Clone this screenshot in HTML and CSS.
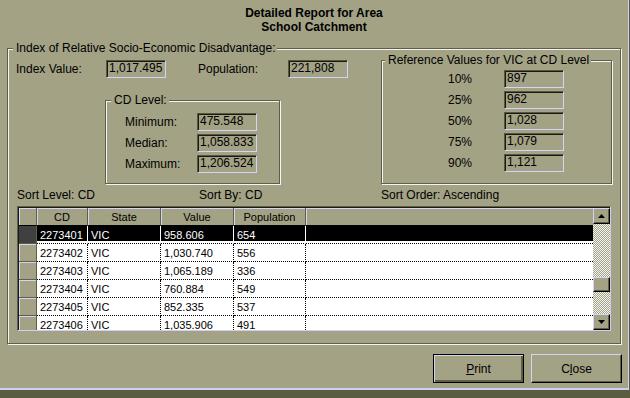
FILE: index.html
```html
<!DOCTYPE html>
<html lang="en">
<head>
    <meta charset="UTF-8">
    <title>Detailed Report for Area</title>
    <link rel="stylesheet" href="styles.css">
</head>
<body>
<div class="window">
    <div class="title">
        Detailed Report for Area<br>
        School Catchment
    </div>

    <fieldset class="group main-group">
        <legend>Index of Relative Socio-Economic Disadvantage:</legend>

        <div class="top">
            <div class="left-col">
                <div class="index-row">
                    <span class="lbl-wide">Index Value:</span>
                    <span class="field">1,017.495</span>
                    <span class="lbl-wide lbl-pop">Population:</span>
                    <span class="field">221,808</span>
                </div>

                <fieldset class="group cd-group">
                    <legend>CD Level:</legend>
                    <div class="value-row"><span class="lbl-cd">Minimum:</span><span class="field">475.548</span></div>
                    <div class="value-row"><span class="lbl-cd">Median:</span><span class="field">1,058.833</span></div>
                    <div class="value-row"><span class="lbl-cd">Maximum:</span><span class="field">1,206.524</span></div>
                </fieldset>
            </div>

            <fieldset class="group ref-group">
                <legend>Reference Values for VIC at CD Level</legend>
                <div class="value-row"><span class="lbl-ref">10%</span><span class="field">897</span></div>
                <div class="value-row"><span class="lbl-ref">25%</span><span class="field">962</span></div>
                <div class="value-row"><span class="lbl-ref">50%</span><span class="field">1,028</span></div>
                <div class="value-row"><span class="lbl-ref">75%</span><span class="field">1,079</span></div>
                <div class="value-row"><span class="lbl-ref">90%</span><span class="field">1,121</span></div>
            </fieldset>
        </div>

        <div class="sort-row">
            <span class="sort-item">Sort Level: CD</span>
            <span class="sort-item">Sort By: CD</span>
            <span class="sort-item">Sort Order: Ascending</span>
        </div>

        <div class="grid">
            <div class="grid-inner">
                <div class="grid-body">
                    <table class="data">
                        <colgroup>
                            <col class="c-ind">
                            <col class="c-cd">
                            <col class="c-state">
                            <col class="c-value">
                            <col class="c-pop">
                            <col>
                        </colgroup>
                        <thead>
                            <tr>
                                <th></th>
                                <th>CD</th>
                                <th>State</th>
                                <th>Value</th>
                                <th>Population</th>
                                <th></th>
                            </tr>
                        </thead>
                        <tbody>
                            <tr class="selected">
                                <td class="ind"></td><td>2273401</td><td>VIC</td><td>958.606</td><td>654</td><td class="fill"></td>
                            </tr>
                            <tr>
                                <td class="ind"></td><td>2273402</td><td>VIC</td><td>1,030.740</td><td>556</td><td class="fill"></td>
                            </tr>
                            <tr>
                                <td class="ind"></td><td>2273403</td><td>VIC</td><td>1,065.189</td><td>336</td><td class="fill"></td>
                            </tr>
                            <tr>
                                <td class="ind"></td><td>2273404</td><td>VIC</td><td>760.884</td><td>549</td><td class="fill"></td>
                            </tr>
                            <tr>
                                <td class="ind"></td><td>2273405</td><td>VIC</td><td>852.335</td><td>537</td><td class="fill"></td>
                            </tr>
                            <tr>
                                <td class="ind"></td><td>2273406</td><td>VIC</td><td>1,035.906</td><td>491</td><td class="fill"></td>
                            </tr>
                        </tbody>
                    </table>
                </div>

                <div class="scrollbar">
                    <div class="sb-btn">
                        <svg width="7" height="4" viewBox="0 0 7 4"><polygon points="3.5,0 7,4 0,4" fill="#000"/></svg>
                    </div>
                    <div class="sb-track">
                        <div class="sb-thumb"></div>
                    </div>
                    <div class="sb-btn">
                        <svg width="7" height="4" viewBox="0 0 7 4"><polygon points="0,0 7,0 3.5,4" fill="#000"/></svg>
                    </div>
                </div>
            </div>
        </div>
    </fieldset>

    <div class="buttons">
        <button class="btn btn-default"><u>P</u>rint</button>
        <button class="btn">C<u>l</u>ose</button>
    </div>
</div>
</body>
</html>
```

FILE: styles.css
```css
* {
    box-sizing: border-box;
}
body {
    margin: 0;
    width: 630px;
    height: 398px;
    overflow: hidden;
    background-color: #5c5c40;
    font-family: "Liberation Sans", Arial, sans-serif;
    font-size: 12px;
    color: #000;
}
.window {
    width: 629px;
    height: 390px;
    background-color: #a3a285;
    border-right: 1px solid #cfcff6;
    border-bottom: 2px solid #cfcff6;
}
.title {
    padding-top: 6px;
    text-align: center;
    font-weight: bold;
    line-height: 14px;
}

/* etched group boxes */
.group {
    margin: 0;
    padding: 0;
    min-width: 0;
    border: 1px solid #5f5f45;
    box-shadow: inset 1px 1px 0 #f4f4f4, 1px 1px 0 #f4f4f4;
}
.group legend {
    padding: 0 2px 0 3px;
    line-height: 14px;
    white-space: nowrap;
    background-color: #a3a285;
}
.main-group {
    margin: 7px 0 0 7px;
    width: 614px;
    padding-bottom: 12px;
}
.main-group > legend {
    margin-left: 5px;
}
.top {
    display: flex;
}
.left-col {
    width: 373px;
    padding-left: 8px;
}
.index-row {
    display: flex;
    margin-top: 5px;
}
.lbl-wide {
    width: 90px;
    line-height: 18px;
}
.lbl-pop {
    margin-left: 32px;
}
.field {
    display: block;
    width: 60px;
    height: 18px;
    padding-left: 2px;
    line-height: 15px;
    border: 1px solid;
    border-color: #57573d #d4d4fa #d4d4fa #57573d;
    box-shadow: inset 1px 1px 0 #1a1a10;
    white-space: nowrap;
}
.value-row {
    display: flex;
    height: 18px;
    margin-bottom: 3px;
}
.value-row:last-child {
    margin-bottom: 0;
}
.cd-group {
    margin: 15px 0 0 89px;
    width: 175px;
    padding: 6px 0 10px 0;
}
.cd-group legend {
    margin-left: 5px;
}
.cd-group .value-row {
    padding-left: 19px;
}
.lbl-cd {
    width: 72px;
    line-height: 18px;
}
.ref-group {
    margin-top: -2px;
    width: 231px;
    padding: 3px 0 10px 0;
}
.ref-group legend {
    margin-left: 3px;
}
.ref-group .value-row {
    padding-left: 66px;
}
.lbl-ref {
    width: 56px;
    line-height: 18px;
}
.sort-row {
    display: flex;
    margin-top: 4px;
    padding-left: 9px;
    line-height: 14px;
}
.sort-item {
    width: 182px;
}

/* data grid */
.grid {
    margin: 4px 0 0 9px;
    width: 594px;
    height: 125px;
    border: 1px solid;
    border-color: #5f5f45 #cfcff6 #cfcff6 #5f5f45;
}
.grid-inner {
    display: flex;
    height: 100%;
    border-top: 1px solid #1a1a10;
    border-left: 1px solid #1a1a10;
}
.grid-body {
    width: 574px;
    overflow: hidden;
    background-color: #fff;
}
.data {
    width: 574px;
    table-layout: fixed;
    border-collapse: separate;
    border-spacing: 0;
    font-size: 11px;
}
.c-ind { width: 18px; }
.c-cd { width: 51px; }
.c-state { width: 73px; }
.c-value { width: 73px; }
.c-pop { width: 72px; }
.data th {
    height: 18px;
    padding: 0;
    font-weight: normal;
    text-align: center;
    line-height: 16px;
    background-color: #a3a285;
    border-right: 1px solid #5f5f45;
    border-bottom: 1px solid #000;
    box-shadow: inset 1px 1px 0 #d4d4fa;
}
.data th:last-child {
    border-right: none;
}
.data td {
    height: 18px;
    padding: 0 0 0 3px;
    line-height: 16px;
    white-space: nowrap;
    overflow: hidden;
    border-right: 1px dotted #000;
    border-bottom: 1px dotted #000;
    background-clip: padding-box;
}
.data td.fill {
    border-right: none;
}
.data td.ind {
    padding: 0;
    background-color: #a3a285;
    border-right: 1px solid #5f5f45;
    border-bottom: 1px solid #5f5f45;
    box-shadow: inset 1px 1px 0 #d4d4fa;
}
.selected td {
    background-color: #000;
    color: #fff;
    border-right-color: #fff;
    box-shadow: inset 0 -2px 0 #fff;
}
.selected td.ind {
    background-color: #404040;
    box-shadow: none;
}

/* scrollbar */
.scrollbar {
    display: flex;
    flex-direction: column;
    width: 17px;
}
.sb-btn {
    display: flex;
    align-items: center;
    justify-content: center;
    height: 16px;
    background-color: #a3a285;
    border: 1px solid;
    border-color: #d4d4fa #000 #000 #d4d4fa;
    box-shadow: inset -1px -1px 0 #5f5f45;
}
.sb-track {
    flex: 1;
    padding-top: 53px;
    background-color: #a3a285;
    background-image: repeating-conic-gradient(#f4f4f4 0 25%, #a3a285 0 50%);
    background-size: 2px 2px;
}
.sb-thumb {
    height: 15px;
    background-color: #a3a285;
    border: 1px solid;
    border-color: #d4d4fa #000 #000 #d4d4fa;
    box-shadow: inset -1px -1px 0 #5f5f45;
}

/* push buttons */
.buttons {
    display: flex;
    justify-content: flex-end;
    gap: 7px;
    margin-top: 10px;
    padding-right: 6px;
}
.btn {
    width: 91px;
    height: 29px;
    padding: 0;
    font-family: "Liberation Sans", Arial, sans-serif;
    font-size: 12px;
    color: #000;
    background-color: #a3a285;
    border: 1px solid;
    border-color: #d4d4fa #000 #000 #d4d4fa;
    box-shadow: inset -1px -1px 0 #5f5f45;
}
.btn-default {
    border-color: #000;
    box-shadow: inset 1px 1px 0 #d4d4fa, inset -2px -2px 0 #5f5f45;
}
```
